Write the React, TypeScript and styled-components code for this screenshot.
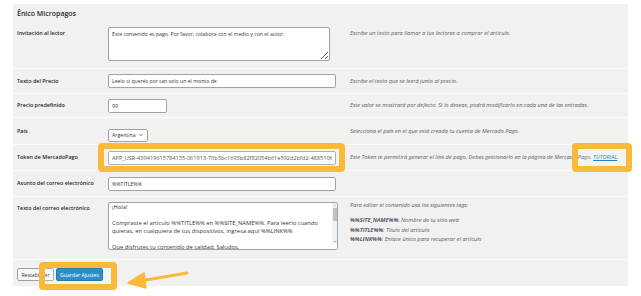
import React from 'react';
import styled, { createGlobalStyle } from 'styled-components';
import { ChevronDown } from 'lucide-react';

const GlobalStyle = createGlobalStyle`
  html, body {
    margin: 0;
    padding: 0;
    background: #ffffff;
  }
  body {
    font-family: "Open Sans", "Noto Sans", sans-serif;
    color: #23282d;
  }
`;

const Page = styled.div`
  position: relative;
  width: 641px;
  height: 296px;
  padding: 4px 13px 0 13px;
  box-sizing: border-box;
`;

const Panel = styled.div`
  background: #f1f1f1;
  height: 282px;
  display: flex;
  flex-direction: column;
`;

const Title = styled.h2`
  margin: 0;
  height: 18px;
  padding: 5px 0 0 4px;
  box-sizing: border-box;
  font-size: 7px;
  font-weight: 600;
  color: #23282d;
  line-height: 9px;
`;

const Row = styled.div<{ $h: number; $tall?: boolean }>`
  display: grid;
  grid-template-columns: 91px 242px 1fr;
  align-items: ${(p) => (p.$tall ? 'start' : 'center')};
  height: ${(p) => p.$h}px;
  padding: ${(p) => (p.$tall ? '5px 0 0 4px' : '0 0 0 4px')};
  box-sizing: border-box;
  border-bottom: 1px solid #fbfbfb;
`;

const Label = styled.div<{ $tall?: boolean }>`
  font-size: 5.4px;
  font-weight: 600;
  line-height: 7px;
  color: #23282d;
  padding-top: ${(p) => (p.$tall ? '3px' : '0')};
`;

const Description = styled.div<{ $tall?: boolean }>`
  font-size: 5.65px;
  font-style: italic;
  line-height: 7px;
  color: #555d66;
  padding-top: ${(p) => (p.$tall ? '3px' : '0')};
  white-space: nowrap;
`;

const TagLine = styled.div<{ $first?: boolean }>`
  height: ${(p) => (p.$first ? '15px' : '9.5px')};
`;

const Tag = styled.strong`
  font-weight: 700;
`;

const Link = styled.a`
  color: #0073aa;
  text-decoration: underline;
`;

const TextInput = styled.input<{ $w: number; $fs?: number }>`
  width: ${(p) => p.$w}px;
  height: 14px;
  box-sizing: border-box;
  margin: 0;
  padding: 0 3px;
  border: 1px solid #9ea3a8;
  border-radius: 2px;
  background: #fff;
  font-family: "Open Sans", "Noto Sans", sans-serif;
  font-size: ${(p) => p.$fs ?? 5.2}px;
  color: #32373c;
  outline: none;
`;

const TextArea = styled.textarea<{ $w: number; $h: number }>`
  width: ${(p) => p.$w}px;
  height: ${(p) => p.$h}px;
  box-sizing: border-box;
  margin: 0;
  padding: 2px 3px;
  border: 1px solid #9ea3a8;
  border-radius: 2px;
  background: #fff;
  font-family: "Open Sans", "Noto Sans", sans-serif;
  font-size: 5.2px;
  line-height: 8.4px;
  color: #32373c;
  outline: none;
`;

/* textarea with a drawn scrollbar (the browser hides real ones) */
const EditorBox = styled.div<{ $w: number; $h: number }>`
  display: flex;
  width: ${(p) => p.$w}px;
  height: ${(p) => p.$h}px;
  box-sizing: border-box;
  border: 1px solid #9ea3a8;
  border-radius: 2px;
  background: #fff;
  overflow: hidden;
`;

const EditorText = styled.textarea`
  flex: 1;
  min-width: 0;
  height: 100%;
  box-sizing: border-box;
  margin: 0;
  padding: 0 3px;
  border: none;
  resize: none;
  background: transparent;
  font-family: "Open Sans", "Noto Sans", sans-serif;
  font-size: 5.8px;
  line-height: 8.1px;
  color: #32373c;
  outline: none;
  overflow: hidden;
`;

const ScrollBar = styled.div`
  width: 5px;
  display: flex;
  flex-direction: column;
  background: #f1f1f1;
`;

const ScrollButton = styled.div<{ $down?: boolean }>`
  height: 5px;
  display: flex;
  align-items: center;
  justify-content: center;
  &::after {
    content: '';
    border-left: 1.3px solid transparent;
    border-right: 1.3px solid transparent;
    ${(p) => (p.$down ? 'border-top: 1.5px solid #606060;' : 'border-bottom: 1.5px solid #a3a3a3;')}
  }
`;

const ScrollThumb = styled.div`
  height: 13px;
  margin: 0 0.5px;
  background: #c1c1c1;
`;

const ScrollTrack = styled.div`
  flex: 1;
`;

const ScrollCorner = styled.div`
  height: 5px;
  background: #fff;
`;

const SelectBox = styled.div`
  display: inline-flex;
  align-items: center;
  gap: 2px;
  width: 40px;
  height: 13px;
  box-sizing: border-box;
  padding: 0 3px;
  border: 1px solid #9ea3a8;
  border-radius: 2px;
  background: #fff;
  font-size: 5.2px;
  color: #32373c;
`;

const Footer = styled.div`
  display: flex;
  align-items: center;
  gap: 2px;
  padding: 8px 0 0 4px;
`;

const Button = styled.button<{ $primary?: boolean }>`
  height: 13px;
  margin: 0;
  padding: 0 3px;
  box-sizing: border-box;
  border-radius: 2px;
  font-family: "Open Sans", "Noto Sans", sans-serif;
  font-size: 5.2px;
  cursor: pointer;
  border: 1px solid ${(p) => (p.$primary ? '#006799' : '#9ea3a8')};
  background: ${(p) => (p.$primary ? '#0a7bbf' : '#f7f7f7')};
  color: ${(p) => (p.$primary ? '#ffffff' : '#32373c')};
  width: ${(p) => (p.$primary ? '47px' : '37px')};
`;

const Highlight = styled.div<{ $x: number; $y: number; $w: number; $h: number }>`
  position: absolute;
  left: ${(p) => p.$x}px;
  top: ${(p) => p.$y}px;
  width: ${(p) => p.$w}px;
  height: ${(p) => p.$h}px;
  box-sizing: border-box;
  border: 6px solid #fbb93a;
  border-radius: 4px;
  background: rgba(255, 255, 255, 0.15);
  pointer-events: none;
`;

const Arrow = styled.svg`
  position: absolute;
  left: 124px;
  top: 264px;
`;

const emailBody = `¡Hola!

Compraste el artículo %%TITLE%% en %%SITE_NAME%%. Para leerlo cuando quieras, en cualquiera de tus dispositivos, ingresa aquí %%LINK%%

Que disfrutes tu contenido de calidad. Saludos,

El equipo de %%SITE_NAME%%`;

const App: React.FC = () => {
  return (
    <>
      <GlobalStyle />
      <Page>
        <Panel>
          <Title>Ênico Micropagos</Title>

          <Row $h={47} $tall>
            <Label $tall>Invitación al lector</Label>
            <TextArea
              $w={222}
              $h={34}
              defaultValue="Este contenido es pago. Por favor, colabora con el medio y con el autor."
            />
            <Description $tall>Escribe un texto para llamar a tus lectores a comprar el artículo.</Description>
          </Row>

          <Row $h={25}>
            <Label>Texto del Precio</Label>
            <TextInput $w={228} defaultValue="Leelo si querés por tan solo un el monto de" />
            <Description>Escribe el texto que se leerá junto al precio.</Description>
          </Row>

          <Row $h={24}>
            <Label>Precio predefinido</Label>
            <TextInput $w={59} defaultValue="99" />
            <Description>Este valor se mostrará por defecto. Si lo deseas, podrá modificarlo en cada una de las entradas.</Description>
          </Row>

          <Row $h={27}>
            <Label>País</Label>
            <div>
              <SelectBox>
                Argentina <ChevronDown size={6} strokeWidth={2.5} />
              </SelectBox>
            </div>
            <Description>Selecciona el país en el que está creada tu cuenta de Mercado Pago.</Description>
          </Row>

          <Row $h={26}>
            <Label>Token de MercadoPago</Label>
            <TextInput
              $w={228}
              $fs={5.6}
              defaultValue="APP_USR-439419615784135-061913-70b3bc1693b82f82054b61e592d2bfd2-4885106"
            />
            <Description>
              Este Token te permitirá generar el link de pago. Debes gestionarlo en la página de Mercado Pago.{' '}
              <Link href="#">TUTORIAL</Link>.
            </Description>
          </Row>

          <Row $h={26}>
            <Label>Asunto del correo electrónico</Label>
            <TextInput $w={228} defaultValue="%%TITLE%%" />
            <div />
          </Row>

          <Row $h={63} $tall>
            <Label $tall>Texto del correo electrónico</Label>
            <EditorBox $w={230} $h={48}>
              <EditorText defaultValue={emailBody} />
              <ScrollBar>
                <ScrollButton />
                <ScrollThumb />
                <ScrollTrack />
                <ScrollButton $down />
                <ScrollCorner />
              </ScrollBar>
            </EditorBox>
            <Description>
              <TagLine $first>Para editar el contenido usa los siguientes tags:</TagLine>
              <TagLine>
                <Tag>%%SITE_NAME%%</Tag>: Nombre de tu sitio web
              </TagLine>
              <TagLine>
                <Tag>%%TITLE%%</Tag>: Título del artículo
              </TagLine>
              <TagLine>
                <Tag>%%LINK%%</Tag>: Enlace único para recuperar el artículo
              </TagLine>
            </Description>
          </Row>

          <Footer>
            <Button>Restablecer</Button>
            <Button $primary>Guardar Ajustes</Button>
          </Footer>
        </Panel>

        <Highlight $x={98} $y={143} $w={247} $h={29} />
        <Highlight $x={572} $y={143} $w={60} $h={29} />
        <Highlight $x={39} $y={262} $w={78} $h={28} />

        <Arrow width="66" height="28" viewBox="0 0 66 28">
          <path d="M63 9 L16 17" stroke="#fbb93a" strokeWidth="3" strokeLinecap="round" fill="none" />
          <path d="M4 19 L20 9 L22 24 Z" fill="#fbb93a" stroke="#fbb93a" strokeWidth="1.5" strokeLinejoin="round" />
        </Arrow>
      </Page>
    </>
  );
};

export default App;
